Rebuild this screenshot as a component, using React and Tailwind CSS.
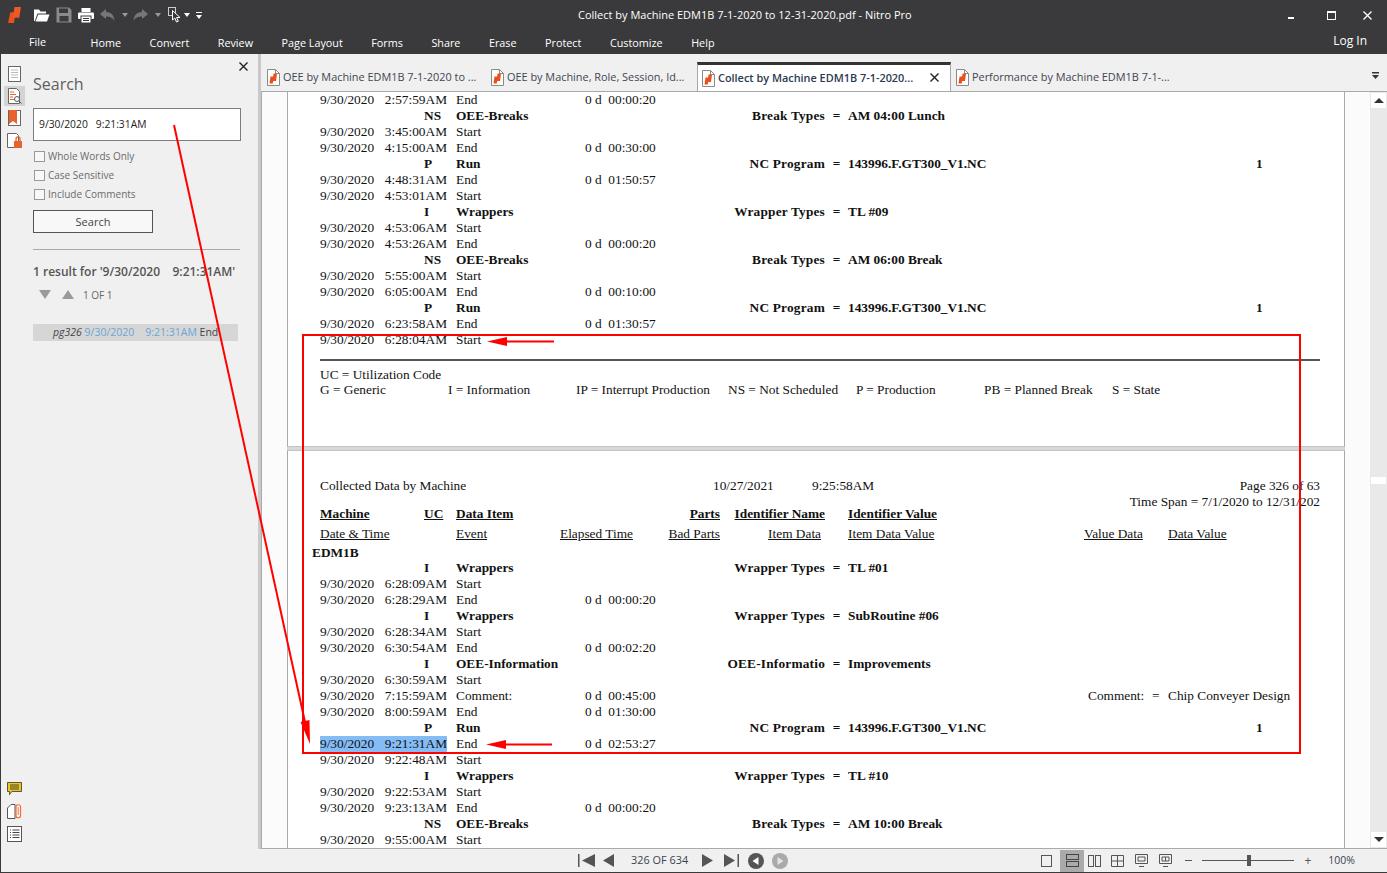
// Nitro Pro window: search panel on the left, PDF report pages on the right.

const UI = "font-['Open_Sans',sans-serif]"

const MENU = ['Home', 'Convert', 'Review', 'Page Layout', 'Forms', 'Share', 'Erase', 'Protect', 'Customize', 'Help']

const TABS = [
  { label: 'OEE by Machine EDM1B 7-1-2020 to ...', width: 'w-[224px]' },
  { label: 'OEE by Machine, Role, Session, Id...', width: 'w-[211px]' },
  { label: 'Collect by Machine EDM1B 7-1-2020...', width: 'w-[254px]', active: true },
  { label: 'Performance by Machine EDM1B 7-1-...', width: 'w-[230px]' },
]

const PAGE_ONE = [
  { d: '2:57:59AM', e: 'End', t: '00:00:20' },
  { uc: 'NS', item: 'OEE-Breaks', name: 'Break Types', val: 'AM 04:00 Lunch' },
  { d: '3:45:00AM', e: 'Start' },
  { d: '4:15:00AM', e: 'End', t: '00:30:00' },
  { uc: 'P', item: 'Run', name: 'NC Program', val: '143996.F.GT300_V1.NC', one: true },
  { d: '4:48:31AM', e: 'End', t: '01:50:57' },
  { d: '4:53:01AM', e: 'Start' },
  { uc: 'I', item: 'Wrappers', name: 'Wrapper Types', val: 'TL #09' },
  { d: '4:53:06AM', e: 'Start' },
  { d: '4:53:26AM', e: 'End', t: '00:00:20' },
  { uc: 'NS', item: 'OEE-Breaks', name: 'Break Types', val: 'AM 06:00 Break' },
  { d: '5:55:00AM', e: 'Start' },
  { d: '6:05:00AM', e: 'End', t: '00:10:00' },
  { uc: 'P', item: 'Run', name: 'NC Program', val: '143996.F.GT300_V1.NC', one: true },
  { d: '6:23:58AM', e: 'End', t: '01:30:57' },
  { d: '6:28:04AM', e: 'Start' },
]

const PAGE_TWO = [
  { uc: 'I', item: 'Wrappers', name: 'Wrapper Types', val: 'TL #01' },
  { d: '6:28:09AM', e: 'Start' },
  { d: '6:28:29AM', e: 'End', t: '00:00:20' },
  { uc: 'I', item: 'Wrappers', name: 'Wrapper Types', val: 'SubRoutine #06' },
  { d: '6:28:34AM', e: 'Start' },
  { d: '6:30:54AM', e: 'End', t: '00:02:20' },
  { uc: 'I', item: 'OEE-Information', name: 'OEE-Informatio', val: 'Improvements' },
  { d: '6:30:59AM', e: 'Start' },
  { d: '7:15:59AM', e: 'Comment:', t: '00:45:00', comment: true },
  { d: '8:00:59AM', e: 'End', t: '01:30:00' },
  { uc: 'P', item: 'Run', name: 'NC Program', val: '143996.F.GT300_V1.NC', one: true },
  { d: '9:21:31AM', e: 'End', t: '02:53:27', hit: true },
  { d: '9:22:48AM', e: 'Start' },
  { uc: 'I', item: 'Wrappers', name: 'Wrapper Types', val: 'TL #10' },
  { d: '9:22:53AM', e: 'Start' },
  { d: '9:23:13AM', e: 'End', t: '00:00:20' },
  { uc: 'NS', item: 'OEE-Breaks', name: 'Break Types', val: 'AM 10:00 Break' },
  { d: '9:55:00AM', e: 'Start' },
]

const LEGEND = [
  ['G = Generic', 'w-[128px]'],
  ['I = Information', 'w-[128px]'],
  ['IP = Interrupt Production', 'w-[152px]'],
  ['NS = Not Scheduled', 'w-[128px]'],
  ['P = Production', 'w-[128px]'],
  ['PB = Planned Break', 'w-[128px]'],
  ['S = State', 'w-[100px]'],
]

function NitroMark({ className }) {
  return (
    <svg viewBox="0 0 12 15" className={className}>
      <path d="M2 5h5L5.500 15H0z" fill="#e8501e" />
      <path d="M6 0h6l-1.500 10H4.500z" fill="#ee5a24" />
    </svg>
  )
}

function PdfIcon() {
  return (
    <svg viewBox="0 0 13 17" className="w-[13px] h-[17px] shrink-0">
      <path d="M.5.500h8l4 4v12H.5z" fill="#fff" stroke="#8a8a8a" />
      <path d="M8.500.500v4h4" fill="none" stroke="#8a8a8a" />
      <path d="M3.500 7.500h3.200l-.9 7H2.500z" fill="#ea4f1c" />
      <path d="M6.500 4.500h3.500l-1 7.500H5.500z" fill="#ea4f1c" />
    </svg>
  )
}

function TitleBar() {
  return (
    <div className={`h-[54px] shrink-0 bg-[#3a3a3c] text-white ${UI}`}>
      <div className="h-[30px] flex items-center">
        <div className="w-[578px] shrink-0 flex items-center pl-[8px]">
          <NitroMark className="w-[13px] h-[16px]" />
          <svg viewBox="0 0 17 14" className="ml-[12px] w-[17px] h-[14px]">
            <path d="M1 13V1.500h5l1.500 2H13v2H4.500L1.800 13z" fill="#fff" />
            <path d="M2.500 13.500 5.200 6.500H16.500L14 13.500z" fill="#fff" />
          </svg>
          <svg viewBox="0 0 16 16" className="ml-[6px] w-[16px] h-[16px]">
            <path d="M.5.500h12.500l2.500 2.500v12.500H.5z" fill="#8a8a8a" />
            <rect x="3" y="1.500" width="9" height="4.500" fill="#3a3a3c" />
            <rect x="3.500" y="9" width="9" height="5.500" fill="#3a3a3c" />
          </svg>
          <svg viewBox="0 0 16 15" className="ml-[6px] w-[16px] h-[15px]">
            <rect x="3.500" y="0" width="9" height="4" fill="#fff" />
            <rect x="0" y="4.500" width="16" height="6.500" rx="1" fill="#fff" />
            <rect x="3" y="8" width="10" height="7" fill="#fff" stroke="#3a3a3c" />
            <path d="M5 10.500h6M5 12.500h6" stroke="#3a3a3c" />
          </svg>
          <svg viewBox="0 0 15 12" className="ml-[6px] w-[15px] h-[12px]">
            <path d="M0 5 6 0v3c5 0 8 3 8.500 9C12.500 8.500 10 7.500 6 7.500V10z" fill="#777" />
          </svg>
          <svg viewBox="0 0 6 4" className="ml-[7px] w-[6px] h-[4px]"><path d="M0 0h6L3 4z" fill="#999" /></svg>
          <svg viewBox="0 0 15 12" className="ml-[5px] w-[15px] h-[12px]">
            <path d="M15 5 9 0v3C4 3 1 6 .5 12 2.500 8.500 5 7.500 9 7.500V10z" fill="#777" />
          </svg>
          <svg viewBox="0 0 6 4" className="ml-[7px] w-[6px] h-[4px]"><path d="M0 0h6L3 4z" fill="#999" /></svg>
          <svg viewBox="0 0 13 16" className="ml-[7px] w-[13px] h-[16px]">
            <rect x=".5" y=".5" width="7" height="8" fill="none" stroke="#ccc" />
            <path d="M4.500 3.500v9.500l2.300-2 1.700 4 1.800-.8-1.700-3.700H12z" fill="#3a3a3c" stroke="#fff" />
          </svg>
          <svg viewBox="0 0 6 4" className="ml-[3px] w-[6px] h-[4px]"><path d="M0 0h6L3 4z" fill="#fff" /></svg>
          <svg viewBox="0 0 6 7" className="ml-[6px] w-[6px] h-[7px]">
            <path d="M0 0h6v1H0z" fill="#fff" /><path d="M0 3h6L3 7z" fill="#fff" />
          </svg>
        </div>
        <div className="text-[11px]">Collect by Machine EDM1B 7-1-2020 to 12-31-2020.pdf - Nitro Pro</div>
        <div className="ml-auto flex items-center">
          <div className="w-[6px] h-[2px] bg-white mt-[5px]" />
          <div className="ml-[33px] w-[9px] h-[9px] border border-white border-t-2" />
          <svg viewBox="0 0 9 9" className="ml-[27px] mr-[15px] w-[9px] h-[9px]">
            <path d="M.5.500l8 8M8.500.500l-8 8" stroke="#fff" strokeWidth="1.300" />
          </svg>
        </div>
      </div>
      <div className="h-[24px] flex items-center text-[10.800px] pt-[2px]">
        <span className="ml-[29px] mr-[44.500px] -mt-[2px]">File</span>
        <div className="flex gap-[28.500px]">
          {MENU.map(m => <span key={m}>{m}</span>)}
        </div>
        <span className="ml-auto mr-[20px] text-[12px] -mt-[4px]">Log In</span>
      </div>
    </div>
  )
}

function IconStrip() {
  return (
    <div className="w-[27px] shrink-0 flex flex-col items-center pb-[7px] border-l border-[#3a3a3c]">
      <svg viewBox="0 0 13 16" className="mt-[12px] w-[13px] h-[16px]">
        <rect x=".5" y=".5" width="12" height="15" fill="#fff" stroke="#666" />
        <path d="M3 4h7M3 6.500h7M3 9h7M3 11.500h7" stroke="#bbb" />
      </svg>
      <div className="mt-[4px] w-[21px] h-[20px] bg-[#d3d3d3] flex items-center justify-center">
        <svg viewBox="0 0 15 16" className="w-[15px] h-[16px]">
          <path d="M1.500.500h8l3 3v12h-11z" fill="#fff" stroke="#666" />
          <path d="M3 4h4M3 6.500h6M3 9h3M3 11.500h4" stroke="#e8622c" />
          <circle cx="10" cy="11" r="2.500" fill="#fff" stroke="#555" />
          <path d="M12 13l2.500 2.500" stroke="#555" />
        </svg>
      </div>
      <svg viewBox="0 0 13 16" className="mt-[4px] w-[13px] h-[16px]">
        <rect x=".5" y=".5" width="12" height="15" fill="#fff" stroke="#666" />
        <path d="M1 0h8v14l-4-3-4 3z" fill="#e8622c" />
      </svg>
      <svg viewBox="0 0 15 15" className="mt-[7px] w-[15px] h-[15px]">
        <path d="M.5.500h9l2 2v12H.5z" fill="#fff" stroke="#666" />
        <rect x="7" y="8" width="8" height="7" rx=".5" fill="#e8622c" />
        <path d="M9 8V6a2 2 0 0 1 4 0v2" fill="none" stroke="#e8622c" strokeWidth="1.300" />
      </svg>
      <svg viewBox="0 0 15 14" className="mt-auto w-[15px] h-[14px]">
        <path d="M0 0h15v10H5l-3 4v-4H0z" fill="#f3c711" />
        <path d="M.5.500h14v9H4.800L2.500 12.500v-3h-2z" fill="none" stroke="#555" />
        <path d="M3 3h9M3 5h9M3 7h9" stroke="#444" />
      </svg>
      <svg viewBox="0 0 15 15" className="mt-[8px] w-[15px] h-[15px]">
        <path d="M.5 14.500V4L4 .500h4v14z" fill="#fff" stroke="#555" />
        <path d="M9 3.500v8a2 2 0 0 0 4.500 0V3a2.200 2.200 0 0 0-4.500 0z" fill="#fff" stroke="#ef6a32" strokeWidth="1.200" />
        <path d="M11.200 3v8" stroke="#ef6a32" />
      </svg>
      <svg viewBox="0 0 15 16" className="mt-[7px] w-[15px] h-[16px]">
        <rect x=".5" y=".5" width="14" height="15" fill="#fff" stroke="#555" />
        <path d="M3 4h1M5.500 4h7M3 6.500h1M5.500 6.500h7M3 9h1M5.500 9h7M3 11.500h1M5.500 11.500h7" stroke="#444" />
      </svg>
    </div>
  )
}

function CheckRow({ label }) {
  return (
    <label className="flex items-center h-[19px] text-[10px] text-[#6b6b6b]">
      <span className="w-[11px] h-[11px] ml-[1px] mr-[3px] bg-[#f8f8f8] border border-[#999]" />
      {label}
    </label>
  )
}

function SearchPanel() {
  return (
    <div className={`w-[231px] shrink-0 flex flex-col relative ${UI}`}>
      <svg viewBox="0 0 9 9" className="absolute left-[212px] top-[8px] w-[9px] h-[9px]">
        <path d="M.5.500l8 8M8.500.500l-8 8" stroke="#222" strokeWidth="1.400" />
      </svg>
      <div className="pl-[6px] pr-[17px]">
        <div className="mt-[17px] h-[26px] text-[16px] leading-[26px] text-[#5e5e5e]">Search</div>
        <div className="mt-[11px] h-[33px] w-[208px] bg-white border border-[#7d7d7d] flex items-center pl-[5px] pt-[1px] text-[10.300px] text-[#222] whitespace-pre">9/30/2020   9:21:31AM</div>
        <div className="mt-[6px]">
          <CheckRow label="Whole Words Only" />
          <CheckRow label="Case Sensitive" />
          <CheckRow label="Include Comments" />
        </div>
        <button className="mt-[6px] h-[23px] w-[120px] bg-[#f8f8f8] border border-[#555] pt-[1px] text-[11px] text-[#444] flex items-center justify-center">Search</button>
        <div className="mt-[16px] h-[1px] w-[207px] bg-[#aaa]" />
        <div className="mt-[13px] text-[12px] leading-[17px] font-semibold text-[#555] whitespace-pre">1 result for '9/30/2020    9:21:31AM'</div>
        <div className="mt-[6px] flex items-center h-[16px]">
          <div className="ml-[6px] w-0 h-0 border-x-[6px] border-x-transparent border-t-[9px] border-t-[#9a9a9a]" />
          <div className="ml-[11px] w-0 h-0 border-x-[6px] border-x-transparent border-b-[9px] border-b-[#9a9a9a]" />
          <span className="ml-[9px] pt-[2px] text-[10px] text-[#666]">1 OF 1</span>
        </div>
        <div className="mt-[22px] h-[17px] w-[205px] bg-[#d6d6d6] flex items-center pl-[20px] pt-[1px] text-[10.500px] text-[#444] whitespace-pre">
          <i>pg326</i>
          <span className="text-[#6aa5d8]"> 9/30/2020    9:21:31AM</span>
          <span> End</span>
        </div>
      </div>
    </div>
  )
}

function Tab({ label, width, active }) {
  return (
    <div className={`${width} h-full shrink-0 flex items-center relative ${active ? 'pl-[4px] bg-white border-x border-[#a8a8a8] border-t-[3px] border-t-[#333] -mb-[1px]' : 'pl-[5px] pt-[1px]'}`}>
      <PdfIcon />
      <span className={`ml-[3px] text-[10.900px] whitespace-nowrap ${active ? 'font-semibold text-[#2c3a50]' : 'text-[#3f4650]'}`}>{label}</span>
      {active && (
        <svg viewBox="0 0 9 9" className="absolute right-[11px] top-[8px] w-[9px] h-[9px]">
          <path d="M.5.500l8 8M8.500.500l-8 8" stroke="#222" strokeWidth="1.400" />
        </svg>
      )}
    </div>
  )
}

function TabBar() {
  return (
    <div className={`h-[38px] shrink-0 bg-[#f0f0f0] border-b border-[#a8a8a8] flex items-end pl-[1px] pr-[8px] ${UI}`}>
      <div className="h-[29px] flex items-stretch">
        {TABS.map(t => <Tab key={t.label} {...t} />)}
      </div>
      <svg viewBox="0 0 7 7" className="ml-auto mb-[12px] w-[7px] h-[7px]">
        <path d="M0 0h7v1.500H0zM0 3h7L3.500 7z" fill="#333" />
      </svg>
    </div>
  )
}

function ReportRow({ d, e, t, uc, item, name, val, one, comment, hit }) {
  return (
    <div className="h-[16px] leading-[16px] flex whitespace-nowrap">
      <div className="w-[136px] shrink-0">
        {d && (
          <span className={`inline-flex w-[127px] ${hit ? 'bg-[#84bcf5]' : ''}`}>
            <span className="w-[65px]">9/30/2020</span>{d}
          </span>
        )}
        {uc && <b className="block pl-[104px]">{uc}</b>}
      </div>
      <div className="w-[129px] shrink-0">{item ? <b>{item}</b> : e}</div>
      <div className="w-[140px] shrink-0">
        {t && <span className="whitespace-pre">0 d  {t}</span>}
      </div>
      <div className="w-[100px] shrink-0 text-right font-bold tracking-[0.2px]">{name}</div>
      <div className="w-[23px] shrink-0 text-center font-bold">{name && '='}</div>
      <div className="w-[236px] shrink-0 font-bold">{val}</div>
      {one && <b className="pl-[172px]">1</b>}
      {comment && (
        <span className="flex">
          <span className="pl-[4px] w-[68px]">Comment:</span>
          <span className="w-[16px]">=</span>
          Chip Conveyer Design
        </span>
      )}
    </div>
  )
}

function ReportHeader() {
  return (
    <>
      <div className="h-[16px] leading-[16px] flex whitespace-nowrap font-bold underline">
        <span className="w-[104px]">Machine</span>
        <span className="w-[32px]">UC</span>
        <span className="w-[208px]">Data Item</span>
        <span className="w-[56px] text-right">Parts</span>
        <span className="w-[105px] text-right">Identifier Name</span>
        <span className="ml-[23px]">Identifier Value</span>
      </div>
      <div className="mt-[4px] h-[16px] leading-[16px] flex whitespace-nowrap underline">
        <span className="w-[136px]">Date &amp; Time</span>
        <span className="w-[104px]">Event</span>
        <span className="w-[108px]">Elapsed Time</span>
        <span className="w-[52px] text-right">Bad Parts</span>
        <span className="w-[101px] text-right">Item Data</span>
        <span className="ml-[27px] w-[236px]">Item Data Value</span>
        <span className="w-[84px]">Value Data</span>
        <span>Data Value</span>
      </div>
    </>
  )
}

function Report() {
  return (
    <div className="ml-[25px] w-[1058px] font-['Liberation_Serif',serif] text-[13.330px] text-[#111]">
      <div className="h-[355px] bg-white border-x border-b border-x-[#aaa] border-b-[#c4c4c4] pl-[32px] pr-[24px]">
        {PAGE_ONE.map((r, i) => <ReportRow key={i} {...r} />)}
        <div className="mt-[11px] h-[2px] bg-[#555]" />
        <div className="mt-[6px] h-[15px] leading-[16px]">UC = Utilization Code</div>
        <div className="h-[16px] leading-[16px] flex whitespace-nowrap">
          {LEGEND.map(([txt, w]) => <span key={txt} className={w}>{txt}</span>)}
        </div>
      </div>
      <div className="h-[3px] bg-[#d8d8d8]" />
      <div className="bg-white border-x border-t border-x-[#aaa] border-t-[#c4c4c4] pl-[32px] pr-[24px] pt-[27px] h-[420px]">
        <div className="h-[16px] leading-[16px] flex whitespace-nowrap">
          <span className="w-[393px]">Collected Data by Machine</span>
          <span className="w-[99px]">10/27/2021</span>
          <span>9:25:58AM</span>
          <span className="ml-auto">Page 326 of 63</span>
        </div>
        <div className="h-[12px] leading-[16px] text-right whitespace-nowrap">Time Span = 7/1/2020 to 12/31/202</div>
        <ReportHeader />
        <div className="mt-[3px] -ml-[8px] h-[15px] leading-[16px] font-bold">EDM1B</div>
        {PAGE_TWO.map((r, i) => <ReportRow key={i} {...r} />)}
      </div>
    </div>
  )
}

function Scrollbar() {
  return (
    <div className="ml-auto w-[17px] shrink-0 bg-[#e9e9e9] flex flex-col items-center justify-between relative">
      <div className="w-[15px] h-[15px] mt-[1px] bg-white flex items-center justify-center">
        <div className="w-0 h-0 border-x-[5px] border-x-transparent border-b-[5px] border-b-[#333]" />
      </div>
      <div className="absolute top-[385px] left-[1px] w-[15px] h-[7px] bg-white" />
      <div className="w-[15px] h-[15px] mb-[1px] bg-white flex items-center justify-center">
        <div className="w-0 h-0 border-x-[5px] border-x-transparent border-t-[5px] border-t-[#333]" />
      </div>
    </div>
  )
}

function NavGroup() {
  return (
    <div className="flex items-center h-full">
      <svg viewBox="0 0 17 13" className="w-[17px] h-[13px]"><path d="M0 0h1.500v13H0zM17 0v13L4 6.500z" fill="#555" /></svg>
      <svg viewBox="0 0 11 13" className="ml-[8px] w-[11px] h-[13px]"><path d="M11 0v13L0 6.500z" fill="#555" /></svg>
      <span className="ml-[17px] w-[57px] text-[10.900px] text-[#3b4350] whitespace-nowrap">326 OF 634</span>
      <svg viewBox="0 0 11 13" className="ml-[14px] w-[11px] h-[13px]"><path d="M0 0v13L11 6.500z" fill="#555" /></svg>
      <svg viewBox="0 0 15 13" className="ml-[11px] w-[15px] h-[13px]"><path d="M0 0v13L11 6.500zM13.500 0H15v13h-1.500z" fill="#555" /></svg>
      <svg viewBox="0 0 16 16" className="ml-[9px] w-[16px] h-[16px]"><circle cx="8" cy="8" r="8" fill="#555" /><path d="M10.500 4v8L4.500 8z" fill="#fff" /></svg>
      <svg viewBox="0 0 16 16" className="ml-[8px] w-[16px] h-[16px]"><circle cx="8" cy="8" r="8" fill="#aaa" /><path d="M5.500 4v8l6-4z" fill="#e4e4e4" /></svg>
    </div>
  )
}

function ViewGroup() {
  return (
    <div className="flex items-center h-full">
      <div className="w-[11px] h-[12px] border border-[#555]" />
      <div className="ml-[8px] w-[24px] h-[22px] bg-[#aaa] flex flex-col items-center justify-center gap-[1px]">
        <div className="w-[13px] h-[6px] border border-[#444]" />
        <div className="w-[13px] h-[6px] border border-[#444]" />
      </div>
      <div className="ml-[4px] flex gap-[1px]">
        <div className="w-[6px] h-[12px] border border-[#555]" />
        <div className="w-[6px] h-[12px] border border-[#555]" />
      </div>
      <svg viewBox="0 0 13 12" className="ml-[10px] w-[13px] h-[12px]">
        <path d="M.5.500h12v11H.5zM6.500.500v11M.5 6h12" fill="none" stroke="#555" />
      </svg>
      <svg viewBox="0 0 13 13" className="ml-[11px] w-[13px] h-[13px]">
        <path d="M.5.500h12v9H.5z" fill="none" stroke="#555" /><path d="M3 3h7v4H3zM4 12.500h5" fill="none" stroke="#555" />
      </svg>
      <svg viewBox="0 0 13 13" className="ml-[11px] w-[13px] h-[13px]">
        <path d="M.5.500h12v9H.5z" fill="none" stroke="#555" /><path d="M3 3h7v4H3zM6.500 3v4M4 12.500h5" fill="none" stroke="#555" />
      </svg>
      <div className="ml-[13px] w-[7px] h-[1px] bg-[#555]" />
      <div className="ml-[10px] w-[92px] h-[1px] bg-[#555] relative">
        <div className="absolute left-[45px] -top-[5px] w-[4px] h-[11px] bg-[#555]" />
      </div>
      <span className="ml-[10px] text-[12px] text-[#555] leading-none">+</span>
      <span className="ml-[17px] mr-[32px] text-[10.500px] text-[#3b4350]">100%</span>
    </div>
  )
}

function StatusBar() {
  return (
    <div className={`h-[24px] shrink-0 flex bg-[#f0f0f0] border-b border-l border-[#3a3a3c] pl-[577px] ${UI}`}>
      <NavGroup />
      <div className="ml-auto"><ViewGroup /></div>
    </div>
  )
}

// The red mark-up someone drew on the screenshot
function Markup() {
  return (
    <svg viewBox="0 0 1387 873" className="absolute inset-0 w-[1387px] h-[873px] pointer-events-none">
      <rect x="303" y="335" width="997" height="418" fill="none" stroke="#f00" strokeWidth="2" />
      <path d="M554 341.500H504" stroke="#f00" strokeWidth="2" />
      <path d="M487 341.500l20-4.500v9z" fill="#f00" />
      <path d="M552 744.500H504" stroke="#f00" strokeWidth="2" />
      <path d="M486 744.500l20-4.500v9z" fill="#f00" />
      <path d="M174 125 305 722" stroke="#f00" strokeWidth="2" />
      <path d="M310 744l-9.500-22 9-2z" fill="#f00" />
    </svg>
  )
}

export default function App() {
  return (
    <div className="relative w-[1387px] h-[873px] overflow-hidden flex flex-col bg-[#f0f0f0]">
      <TitleBar />
      <div className="flex-1 min-h-0 flex">
        <IconStrip />
        <SearchPanel />
        <div className="w-[3px] shrink-0 bg-[#c9c9c9]" />
        <div className="flex-1 min-w-0 flex flex-col">
          <TabBar />
          <div className="flex-1 min-h-0 flex overflow-hidden bg-[#fbfbfb] border-l border-[#aaa] border-b">
            <Report />
            <Scrollbar />
          </div>
        </div>
      </div>
      <StatusBar />
      <Markup />
    </div>
  )
}
